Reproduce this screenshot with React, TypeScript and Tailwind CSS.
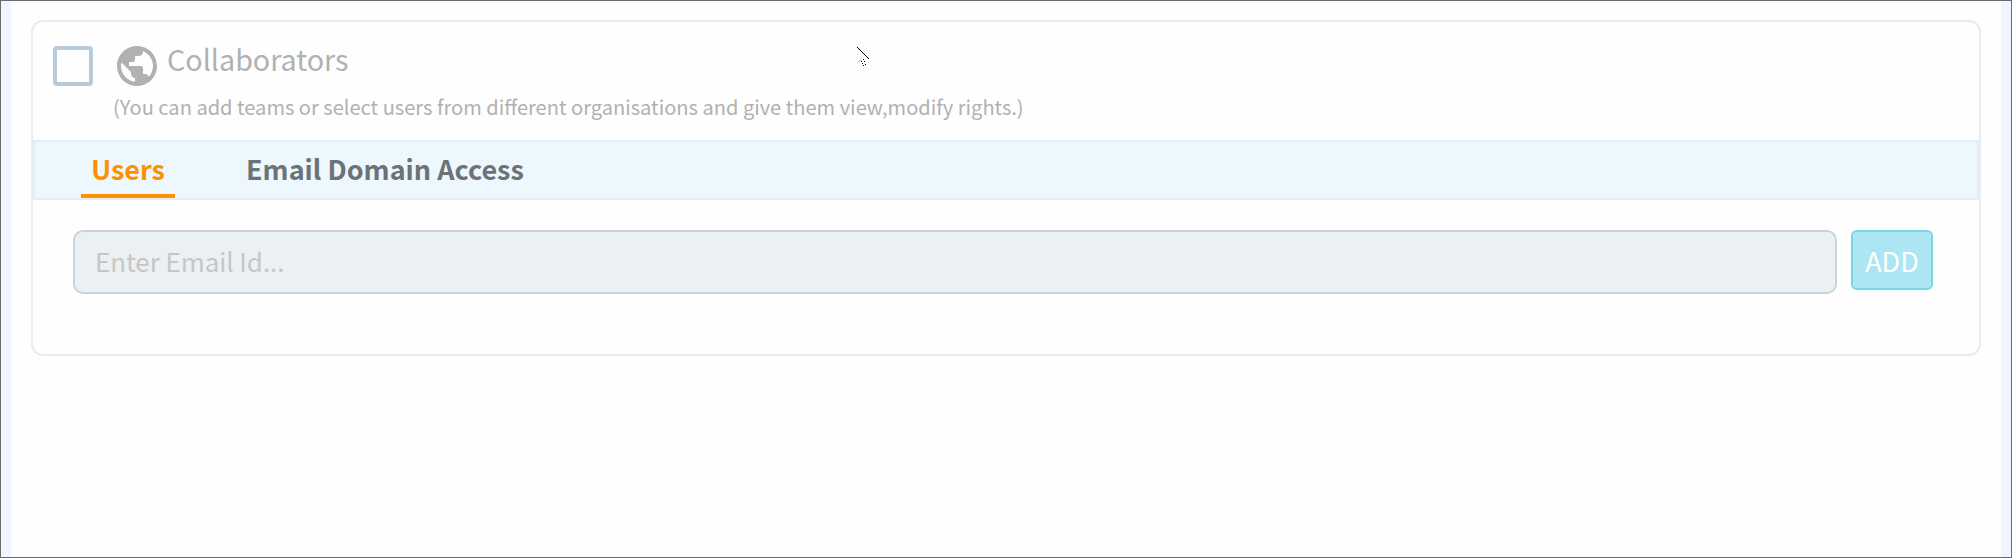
import React from "react";
import { MdPublic } from "react-icons/md";

export default function App() {
  return (
    <div className="h-[558px] w-[2012px] border border-[#6b6b6b] font-['Noto_Sans_CJK_SC',sans-serif]">
      <div className="h-full border-x-10 border-[#f1f5ff] bg-[#fefefe] px-5 pt-[19px]">
        <section className="relative h-[336px] w-[1950px] rounded-xl border-2 border-[#e5edf4]">
          <header className="flex h-[118px] pt-6 pl-5">
            <div className="size-10 rounded-[4px] border-4 border-[#b8cbdd]" />
            <div className="ml-5">
              <div className="flex h-10">
                <MdPublic className="-mt-1 size-12 text-[#b1b1b1]" />
                <h1 className="ml-1.5 text-[28.7px] leading-[26px] whitespace-nowrap text-[#b1b1b1]">Collaborators</h1>
              </div>
              <p className="mt-[6px] text-[20.07px] leading-[30px] whitespace-nowrap text-[#b1b1b1]">
                (You can add teams or select users from different organisations and give them view,modify rights.)
              </p>
            </div>
          </header>
          <nav className="flex h-[60px] border-2 border-[#e5edf4] bg-[#ecf7fe] pl-[46px] text-[27px] leading-[50px] font-bold">
            <button className="h-[56px] w-[94px] border-b-4 border-[#ff9100] pt-0.5 text-[#ff9100]">Users</button>
            <button className="ml-[71px] h-[56px] pt-0.5 pb-1 whitespace-nowrap text-[#6c7275]">Email Domain Access</button>
          </nav>
          <div className="flex gap-[14px] pt-[30px] pl-10 text-[27px]">
            <input
              className="h-16 w-[1764px] rounded-[10px] border-2 border-[#c8d3dd] bg-[#ebf1f3] px-5 pb-1 text-[26px] tracking-[-0.08px] placeholder:text-[#c6c6c6]"
              placeholder="Enter Email Id..."
            />
            <button className="h-[60px] w-[82px] rounded-md border-2 border-[#79d5e9] bg-[#ade6f3] pt-0.5 text-white">ADD</button>
          </div>
          <svg className="absolute top-[25px] left-[824px] h-6 w-4" viewBox="0 0 16 24" shapeRendering="crispEdges">
            <path
              fill="#000"
              d="M0 0h1v1h-1zM1 1h1v1h-1zM2 2h1v1h-1zM3 3h1v1h-1zM4 4h1v1h-1zM5 5h1v1h-1zM6 6h1v1h-1zM7 7h1v1h-1zM8 8h1v1h-1zM9 9h1v1h-1zM10 10h1v1h-1zM11 11h1v1h-1zM6 12h1v1h-1zM4 14h1v1h-1zM7 14h1v1h-1zM5 16h1v1h-1zM8 17h1v1h-1zM6 18h1v1h-1z"
            />
            <path fill="#ccc" d="M2 13h3v1h-3zM1 14h2v1h-2zM0 15h1v1h-1z" />
          </svg>
        </section>
      </div>
    </div>
  );
}
